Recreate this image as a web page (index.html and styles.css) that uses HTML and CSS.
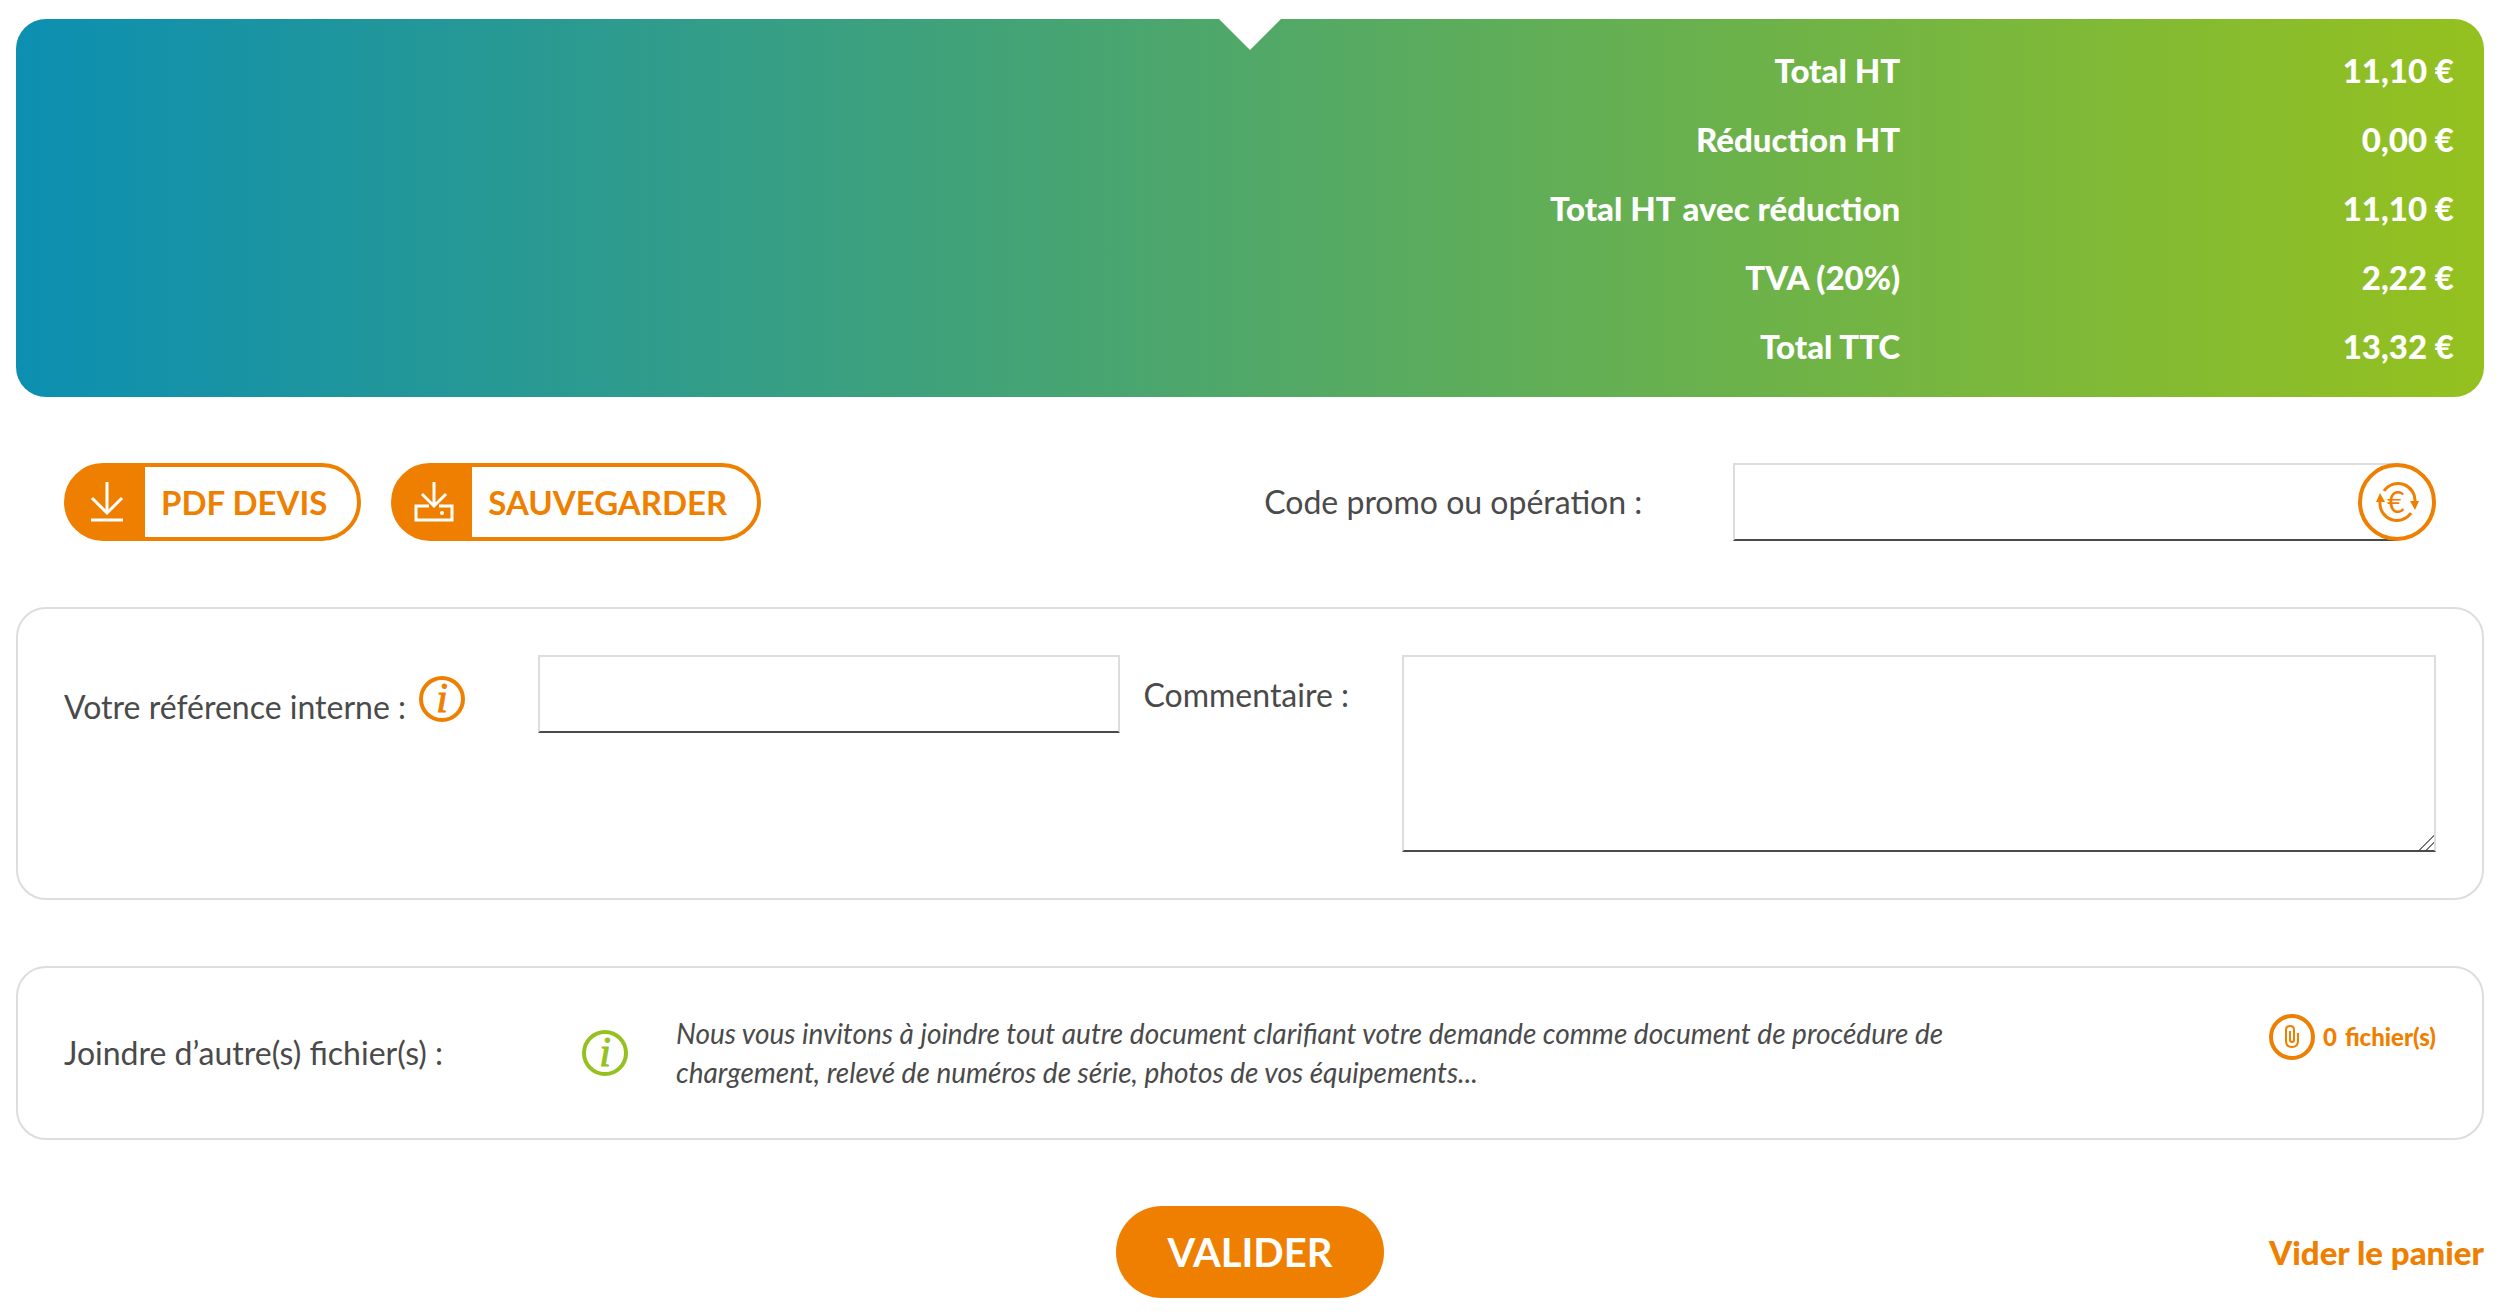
FILE: index.html
```html
<!DOCTYPE html>
<html lang="fr">

<head>
    <meta charset="UTF-8">
    <title>Panier</title>
    <link rel="stylesheet" href="styles.css">
</head>

<body>
    <section class="totals">
        <table class="totals-table">
            <tr>
                <th scope="row">Total HT</th>
                <td>11,10 €</td>
            </tr>
            <tr>
                <th scope="row">Réduction HT</th>
                <td>0,00 €</td>
            </tr>
            <tr>
                <th scope="row">Total HT avec réduction</th>
                <td>11,10 €</td>
            </tr>
            <tr>
                <th scope="row">TVA (20%)</th>
                <td>2,22 €</td>
            </tr>
            <tr>
                <th scope="row">Total TTC</th>
                <td>13,32 €</td>
            </tr>
        </table>
    </section>

    <form>
        <div class="actions">
            <div class="action-buttons">
                <button type="button" class="btn-icon">
                    <span class="btn-picto">
                        <svg width="40" height="40" viewBox="0 0 40 40" fill="none" stroke="#fff" stroke-width="3">
                            <path d="M20 0v31M5 16l15 15 15-15M4 38h32" />
                        </svg>
                    </span>
                    <span class="btn-text">PDF DEVIS</span>
                </button>
                <button type="button" class="btn-icon">
                    <span class="btn-picto">
                        <svg width="40" height="40" viewBox="0 0 40 40" fill="none" stroke="#fff" stroke-width="3">
                            <path d="M20 0v24M8 12l12 12 12-12M15 24H2v14h36V24H25" />
                            <circle cx="28" cy="31" r="2" fill="#fff" stroke="none" />
                        </svg>
                    </span>
                    <span class="btn-text">SAUVEGARDER</span>
                </button>
            </div>
            <div class="promo">
                <label for="promo">Code promo ou opération :</label>
                <div class="promo-field">
                    <input type="text" id="promo" class="field">
                    <button type="button" class="promo-apply" aria-label="Appliquer le code">
                        <svg width="44" height="44" viewBox="0 0 44 44">
                            <path d="M9 11a17 17 0 0 1 31 11M36 33a17 17 0 0 1-31-11" fill="none" stroke="#ef7f00" stroke-width="3" />
                            <path d="M1 22l4-9 5 9zM35 21h9l-4 9z" fill="#ef7f00" />
                            <text x="21" y="33" text-anchor="middle" class="euro">€</text>
                        </svg>
                    </button>
                </div>
            </div>
        </div>

        <section class="card reference">
            <div class="reference-label">
                <label for="reference">Votre référence interne :</label>
                <svg class="info" width="48" height="48" viewBox="0 0 48 48">
                    <circle cx="24" cy="24" r="21" />
                    <text x="24" y="37" text-anchor="middle">i</text>
                </svg>
            </div>
            <input type="text" id="reference" class="field">
            <label for="comment" class="comment-label">Commentaire :</label>
            <textarea id="comment" class="field comment"></textarea>
        </section>

        <section class="card files">
            <span>Joindre d’autre(s) fichier(s) :</span>
            <svg class="info info-green" width="48" height="48" viewBox="0 0 48 48">
                <circle cx="24" cy="24" r="21" />
                <text x="24" y="37" text-anchor="middle">i</text>
            </svg>
            <p class="files-help">Nous vous invitons à joindre tout autre document clarifiant votre demande comme document de procédure de chargement, relevé de numéros de série, photos de vos équipements...</p>
            <button type="button" class="attach">
                <svg width="46" height="46" viewBox="0 0 46 46" fill="none" stroke="#ef7f00">
                    <circle cx="23" cy="23" r="21" stroke-width="4" />
                    <path d="M29 19v8q0 6-6 6t-6-6V16q0-4 4-4t4 4v10q0 2-2 2t-2-2v-9" stroke-width="2" />
                </svg>
                <span>0</span>
                <span>fichier(s)</span>
            </button>
        </section>

        <div class="footer">
            <button type="submit" class="submit">VALIDER</button>
            <a href="#" class="empty-cart">Vider le panier</a>
        </div>
    </form>
</body>

</html>
```

FILE: styles.css
```css
* {
    box-sizing: border-box;
}

body {
    margin: 19px 16px;
    font-family: Lato, "Open Sans", sans-serif;
    font-size: 32px;
    line-height: 40px;
    color: #4a4a4a;
    background: #fff;
}

button,
input,
textarea {
    font: inherit;
}

button {
    cursor: pointer;
}

/* Totals */
.totals {
    position: relative;
    padding: 16px 30px 17px;
    border-radius: 30px;
    background: linear-gradient(90deg, #0c8fb1, #95c11f);
    color: #fff;
}

.totals::before {
    content: "";
    position: absolute;
    top: 0;
    left: 50%;
    margin-left: -31px;
    border: 31px solid transparent;
    border-top-color: #fff;
    border-bottom: 0;
}

.totals-table {
    width: 100%;
    border-collapse: collapse;
    font-size: 33px;
    font-weight: 900;
}

.totals-table th,
.totals-table td {
    height: 69px;
    padding: 0;
    text-align: right;
}

.totals-table th {
    width: 77%;
    font-weight: 900;
}

/* Buttons and promo code */
.actions {
    display: flex;
    justify-content: space-between;
    align-items: center;
    margin: 66px 0;
    padding: 0 48px;
}

.action-buttons {
    display: flex;
    gap: 30px;
}

.btn-icon {
    display: flex;
    height: 78px;
    padding: 0;
    border: 4px solid #ef7f00;
    border-radius: 39px;
    background: linear-gradient(90deg, #ef7f00 77px, #fff 77px);
    color: #ef7f00;
    font-size: 33px;
    font-weight: bold;
}

.btn-picto {
    display: flex;
    align-items: center;
    justify-content: center;
    width: 77px;
    height: 100%;
}

.btn-text {
    padding: 0 30px 0 16px;
    line-height: 70px;
}

.promo {
    display: flex;
    align-items: center;
    width: 49.4%;
}

.promo label {
    width: 40%;
}

.promo-field {
    position: relative;
    flex: 1;
    padding-right: 39px;
}

.field {
    display: block;
    width: 100%;
    height: 78px;
    padding: 0 16px;
    border: 2px solid #ddd;
    border-bottom-color: #4a4a4a;
    border-radius: 0;
    background: #fff;
    color: #4a4a4a;
}

.promo-apply {
    position: absolute;
    top: 0;
    right: 0;
    display: flex;
    align-items: center;
    justify-content: center;
    width: 78px;
    height: 78px;
    padding: 0;
    border: 4px solid #ef7f00;
    border-radius: 50%;
    background: #fff;
}

.euro {
    font-size: 30px;
    fill: #ef7f00;
}

/* Cards */
.card {
    margin-bottom: 66px;
    padding: 46px;
    border: 2px solid #ddd;
    border-radius: 30px;
}

.reference {
    display: grid;
    grid-template-columns: 200fr 245fr 119fr 436fr;
    align-items: start;
}

.reference-label {
    display: flex;
    align-items: center;
    gap: 12px;
    padding-top: 16px;
}

.reference-label label {
    padding-top: 16px;
}

.comment-label {
    padding: 20px 0 0 24px;
}

.comment {
    height: 197px;
    resize: vertical;
}

.comment::-webkit-resizer {
    background: linear-gradient(135deg, transparent 48%, #777 48%, #777 54%, transparent 54%, transparent 72%, #777 72%, #777 78%, transparent 78%);
}

.info circle {
    fill: none;
    stroke: #ef7f00;
    stroke-width: 4;
}

.info text {
    font-family: "Liberation Serif", serif;
    font-size: 42px;
    font-style: italic;
    fill: #ef7f00;
    stroke: #ef7f00;
    stroke-width: 1;
}

.info-green circle {
    stroke: #95c11f;
}

.info-green text {
    fill: #95c11f;
    stroke: #95c11f;
}

.files {
    display: grid;
    grid-template-columns: 218fr 40fr 552fr 190fr;
    align-items: center;
}

.files-help {
    margin: 0;
    font-size: 28px;
    line-height: 39px;
    font-style: italic;
}

.attach {
    display: flex;
    align-items: center;
    align-self: start;
    justify-self: end;
    gap: 8px;
    padding: 0;
    border: 0;
    background: none;
    color: #ef7f00;
    font-size: 24px;
    font-weight: 900;
}

/* Footer */
.footer {
    display: grid;
    grid-template-columns: 1fr auto 1fr;
    align-items: center;
}

.submit {
    grid-column: 2;
    height: 92px;
    padding: 0 51px;
    border: 0;
    border-radius: 46px;
    background: #ef7f00;
    color: #fff;
    font-size: 40px;
    font-weight: bold;
}

.empty-cart {
    justify-self: end;
    color: #ef7f00;
    font-size: 33px;
    font-weight: 900;
    text-decoration: none;
}
```
